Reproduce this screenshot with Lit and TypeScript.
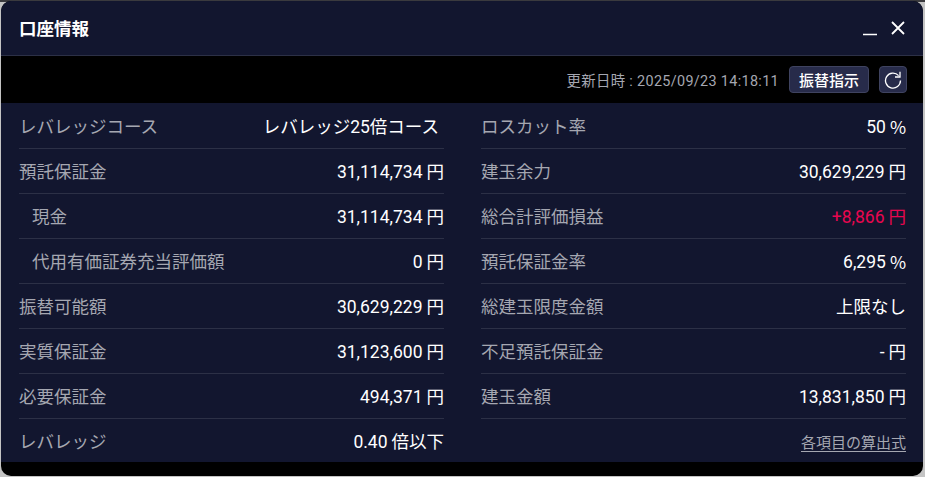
import { LitElement, html, css, svg } from "lit";
import { customElement } from "lit/decorators.js";

type Row = { label: string; value: string; unit?: string; sub?: boolean; red?: boolean; wide?: boolean };

const left: Row[] = [
  { label: "レバレッジコース", value: "レバレッジ25倍コース", wide: true },
  { label: "預託保証金", value: "31,114,734", unit: "円" },
  { label: "現金", value: "31,114,734", unit: "円", sub: true },
  { label: "代用有価証券充当評価額", value: "0", unit: "円", sub: true },
  { label: "振替可能額", value: "30,629,229", unit: "円" },
  { label: "実質保証金", value: "31,123,600", unit: "円" },
  { label: "必要保証金", value: "494,371", unit: "円" },
  { label: "レバレッジ", value: "0.40", unit: "倍以下" },
];
const right: Row[] = [
  { label: "ロスカット率", value: "50", unit: "%" },
  { label: "建玉余力", value: "30,629,229", unit: "円" },
  { label: "総合計評価損益", value: "+8,866", unit: "円", red: true },
  { label: "預託保証金率", value: "6,295", unit: "%" },
  { label: "総建玉限度金額", value: "上限なし" },
  { label: "不足預託保証金", value: "-", unit: "円" },
  { label: "建玉金額", value: "13,831,850", unit: "円" },
];

@customElement("app-root")
export class AppRoot extends LitElement {
  static styles = css`
    :host {
      display: block;
      width: 925px;
      height: 477px;
      background: #c9c9c9;
      font-family: Roboto, "Noto Sans CJK JP", sans-serif;
      overflow: hidden;
    }
    .stage {
      height: 477px;
      box-sizing: border-box;
      padding: 1px 2px 1px 1px;
      background: linear-gradient(#3a3a3e 0 2px, #c4c4c4 2px);
    }
    .win {
      height: 475px;
      border-radius: 10px;
      overflow: hidden;
      background: #000;
      display: flex;
      flex-direction: column;
    }
    .head {
      height: 55px;
      flex: none;
      box-sizing: border-box;
      background: #12162f;
      border-bottom: 1px solid #2c3046;
      display: flex;
      align-items: center;
      justify-content: space-between;
      padding: 0 18px 0 18px;
    }
    .title {
      color: #fff;
      font-size: 17.5px;
      font-weight: 700;
      line-height: 20px;
      padding-top: 2px;
    }
    .winbtns {
      display: flex;
      align-items: center;
      gap: 14px;
    }
    .winbtns svg {
      display: block;
    }
    .tools {
      height: 47px;
      flex: none;
      box-sizing: border-box;
      background: #000;
      display: flex;
      align-items: center;
      justify-content: flex-end;
      gap: 10px;
      padding: 0 16px 0 0;
    }
    .updated {
      color: #a5a7b1;
      font-size: 14.4px;
      letter-spacing: 0.33px;
    }
    .btn {
      height: 27px;
      box-sizing: border-box;
      background: #272b4a;
      border: 1px solid #3f4360;
      border-radius: 4px;
      color: #fff;
      font-size: 15px;
      font-weight: 500;
      display: flex;
      align-items: center;
      justify-content: center;
      padding: 0 9px;
    }
    .btn.icon {
      width: 28px;
      padding: 0;
    }
    .panel {
      height: 359px;
      flex: none;
      box-sizing: border-box;
      background: #12162f;
      display: grid;
      grid-template-columns: 425px 425px;
      column-gap: 37px;
      padding: 1px 17px 0 18px;
    }
    .row {
      height: 45px;
      box-sizing: border-box;
      border-bottom: 1px solid #2c3046;
      padding-top: 2px;
      display: flex;
      align-items: center;
      justify-content: space-between;
      font-size: 17.5px;
      line-height: 24px;
    }
    .row.last {
      border-bottom-color: transparent;
    }
    .label {
      color: #a5a7b1;
    }
    .sub .label {
      padding-left: 13px;
    }
    .value {
      color: #fff;
      display: flex;
      gap: 4px;
    }
    .value.pct .unit {
      font-family: "Noto Sans CJK JP", sans-serif;
    }
    .wide .value {
      padding-right: 5px;
    }
    .red .value {
      color: #e8064f;
    }
    .foot {
      height: 45px;
      box-sizing: border-box;
      padding-top: 2px;
      display: flex;
      align-items: center;
      justify-content: flex-end;
    }
    .link {
      color: #a5a7b1;
      font-size: 15px;
      line-height: 18px;
      text-decoration: underline;
      text-underline-offset: 3px;
    }
  `;

  private row(r: Row, last = false) {
    const cls = ["row", r.sub ? "sub" : "", r.red ? "red" : "", r.wide ? "wide" : "", last ? "last" : ""].join(" ");
    return html`<div class=${cls}>
      <span class="label">${r.label}</span>
      <span class="value ${r.unit === "%" ? "pct" : ""}"><span>${r.value}</span>${r.unit ? html`<span class="unit">${r.unit}</span>` : ""}</span>
    </div>`;
  }

  render() {
    return html`<div class="stage">
      <div class="win">
        <div class="head">
          <div class="title">口座情報</div>
          <div class="winbtns">
            <svg width="14" height="18" viewBox="0 0 14 18">
              <path d="M0 15.5H14" stroke="#fff" stroke-width="1.6" fill="none" />
            </svg>
            <svg width="14" height="14" viewBox="0 0 14 14">
              <path d="M1 1L13 13M13 1L1 13" stroke="#fff" stroke-width="1.8" fill="none" />
            </svg>
          </div>
        </div>
        <div class="tools">
          <span class="updated">更新日時 : 2025/09/23 14:18:11</span>
          <div class="btn">振替指示</div>
          <div class="btn icon">
            <svg width="18" height="18" viewBox="0 0 18 18">
              ${svg`<path d="M14.6 4.6A7.5 7.5 0 1 0 16.5 9.5" stroke="#fff" stroke-width="1.3" fill="none" />
              <path d="M16 0.8V6H11" stroke="#fff" stroke-width="1.3" fill="none" />`}
            </svg>
          </div>
        </div>
        <div class="panel">
          <div>${left.map((r, i) => this.row(r, i === left.length - 1))}</div>
          <div>
            ${right.map((r) => this.row(r))}
            <div class="foot"><span class="link">各項目の算出式</span></div>
          </div>
        </div>
      </div>
    </div>`;
  }
}
